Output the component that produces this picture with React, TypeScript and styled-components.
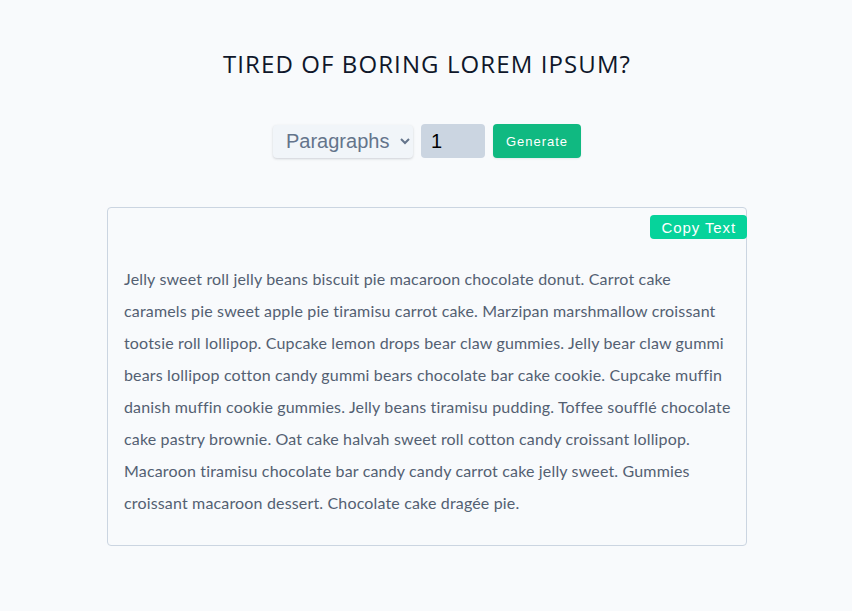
import React from "react";
import styled, { createGlobalStyle } from "styled-components";

const Global = createGlobalStyle`
  html, body { margin: 0; padding: 0; background: #f8fafc; }
  body { font-family: "Open Sans", "Noto Sans", sans-serif; }
  * { box-sizing: border-box; }
`;

const Page = styled.main`
  display: flex;
  flex-direction: column;
  align-items: center;
  padding-top: 49px;
  padding-left: 2px;
  min-height: 611px;
`;

const Title = styled.h1`
  margin: 0;
  font-family: "Open Sans", sans-serif;
  font-weight: 400;
  font-size: 24px;
  line-height: 30px;
  letter-spacing: 1.1px;
  color: #0f172a;
  text-transform: uppercase;
`;

const Form = styled.form`
  display: flex;
  align-items: center;
  gap: 8px;
  margin-top: 45px;
`;

const Select = styled.select`
  width: 140px;
  height: 33px;
  padding: 0 0 0 9px;
  border: none;
  border-radius: 4px;
  background: #f1f5f9;
  box-shadow: 0 1px 3px rgba(15, 23, 42, 0.12), 0 1px 2px rgba(15, 23, 42, 0.06);
  font-family: "Liberation Sans", Arial, sans-serif;
  font-size: 20px;
  color: #64748b;
  outline: none;
`;

const NumberInput = styled.input`
  width: 64px;
  height: 34px;
  padding: 0 10px;
  border: none;
  border-radius: 4px;
  background: #cbd5e1;
  font-family: "Liberation Sans", Arial, sans-serif;
  font-size: 20px;
  color: #000;
  outline: none;
`;

const Button = styled.button<{ $variant?: "primary" | "copy" }>`
  border: none;
  border-radius: 4px;
  color: #fff;
  font-family: "Liberation Sans", Arial, sans-serif;
  cursor: pointer;
  background: ${(p) => (p.$variant === "copy" ? "#06d39b" : "#10b981")};
  ${(p) =>
    p.$variant === "copy"
      ? `
    height: 24px;
    padding: 0 11px;
    font-size: 15px;
    letter-spacing: 0.9px;
  `
      : `
    height: 34px;
    width: 88px;
    font-size: 13px;
    letter-spacing: 1px;
    box-shadow: 0 1px 2px rgba(15, 23, 42, 0.08);
  `}
`;

const Card = styled.section`
  margin-top: 49px;
  width: 640px;
  border: 1px solid #cbd5e1;
  border-radius: 4px;
  padding: 7px 0 26px;
  display: flex;
  flex-direction: column;
`;

const CardTop = styled.div`
  display: flex;
  justify-content: flex-end;
  margin-right: -1px;
`;

const Text = styled.p`
  margin: 24px 0 0;
  padding: 0 4px 0 16px;
  font-family: "Lato", sans-serif;
  font-size: 16px;
  line-height: 32px;
  letter-spacing: 0.16px;
  color: #536072;
  white-space: nowrap;
`;

const lines = [
  "Jelly sweet roll jelly beans biscuit pie macaroon chocolate donut. Carrot cake",
  "caramels pie sweet apple pie tiramisu carrot cake. Marzipan marshmallow croissant",
  "tootsie roll lollipop. Cupcake lemon drops bear claw gummies. Jelly bear claw gummi",
  "bears lollipop cotton candy gummi bears chocolate bar cake cookie. Cupcake muffin",
  "danish muffin cookie gummies. Jelly beans tiramisu pudding. Toffee soufflé chocolate",
  "cake pastry brownie. Oat cake halvah sweet roll cotton candy croissant lollipop.",
  "Macaroon tiramisu chocolate bar candy candy carrot cake jelly sweet. Gummies",
  "croissant macaroon dessert. Chocolate cake dragée pie.",
];

export default function App() {
  return (
    <>
      <Global />
      <Page>
        <Title>Tired of boring lorem ipsum?</Title>
        <Form onSubmit={(e) => e.preventDefault()}>
          <Select defaultValue="paragraphs">
            <option value="paragraphs">Paragraphs</option>
            <option value="words">Words</option>
          </Select>
          <NumberInput type="text" defaultValue="1" />
          <Button type="submit">Generate</Button>
        </Form>
        <Card>
          <CardTop>
            <Button type="button" $variant="copy">Copy Text</Button>
          </CardTop>
          <Text>
            {lines.map((l, i) => (
              <React.Fragment key={i}>
                {l}
                {i < lines.length - 1 && <br />}
              </React.Fragment>
            ))}
          </Text>
        </Card>
      </Page>
    </>
  );
}
